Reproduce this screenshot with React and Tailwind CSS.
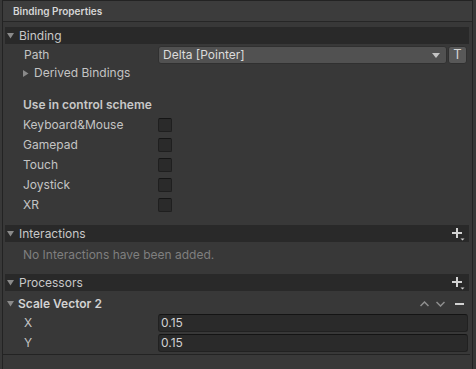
import React from 'react';

const Tri = ({ down = true }) =>
  down ? (
    <svg width="7" height="7" viewBox="0 0 7 7" className="shrink-0">
      <path d="M0 1 L7 1 L3.5 6.5 Z" fill="#8a8a8a" />
    </svg>
  ) : (
    <svg width="7" height="7" viewBox="0 0 7 7" className="shrink-0">
      <path d="M1 0 L6.5 3.5 L1 7 Z" fill="#8a8a8a" />
    </svg>
  );

const PlusMenu = () => (
  <svg width="14" height="13" viewBox="0 0 14 13">
    <path d="M5 0 H7 V4 H11 V6 H7 V10 H5 V6 H1 V4 H5 Z" fill="#d2d2d2" />
    <path d="M9.5 10.5 H13.5 L11.5 12.5 Z" fill="#d2d2d2" />
  </svg>
);

function Header({ title, plus }) {
  return (
    <div className="ml-[2px] mr-[3px] h-[17px] shrink-0 bg-[#292929] flex items-center pl-[2px] pr-[4px]">
      <Tri />
      <span className="ml-[5px] text-[12px] text-[#c8c8c8]">{title}</span>
      {plus && (
        <span className="ml-auto mt-[2px]">
          <PlusMenu />
        </span>
      )}
    </div>
  );
}

function Checkbox() {
  return (
    <div className="w-[14px] h-[14px] rounded-[2px] bg-[#2a2a2a] border border-[#1f1f1f] border-t-[#151515]" />
  );
}

function InputRow({ label, value }) {
  return (
    <div className="h-[20px] shrink-0 flex items-start">
      <span className="w-[155px] h-[18px] flex items-center pl-[21px] text-[12px] text-[#c4c4c4]">{label}</span>
      <div className="w-[310px] h-[18px] rounded-[3px] bg-[#2a2a2a] border border-[#212121] border-t-[#141414] flex items-center px-[2px] text-[12px] text-[#d2d2d2]">
        {value}
      </div>
    </div>
  );
}

export default function App() {
  const schemes = ['Keyboard&Mouse', 'Gamepad', 'Touch', 'Joystick', 'XR'];

  return (
    <div className="w-[476px] h-[369px] bg-[#383838] overflow-hidden" style={{ fontFamily: 'Inter, "Noto Sans", sans-serif' }}>
      <div className="ml-[2px] w-[471px] h-[369px] border-l border-r border-t border-[#232323] flex flex-col">
        {/* Title */}
        <div className="h-[21px] shrink-0 bg-[#3c3c3c] border-b border-[#262626] flex items-center pl-[10px] text-[10px] font-semibold text-[#d6d6d6]">
          Binding Properties
        </div>

        <div className="h-[5px] shrink-0" />
        <Header title="Binding" />

        {/* Path */}
        <div className="h-[20px] shrink-0 mt-[1px] flex items-center">
          <span className="w-[155px] pl-[21px] text-[12px] text-[#c4c4c4]">Path</span>
          <div className="w-[289px] h-[18px] rounded-[3px] bg-[#515151] border border-[#303030] flex items-center pl-[4px] pr-[6px] text-[12px] text-[#dcdcdc]">
            Delta [Pointer]
            <svg width="8" height="5" viewBox="0 0 8 5" className="ml-auto">
              <path d="M0 0 H8 L4 5 Z" fill="#c4c4c4" />
            </svg>
          </div>
          <div className="ml-[1px] w-[19px] h-[18px] rounded-[3px] bg-[#585858] border border-[#303030] flex items-center justify-center text-[13px] text-[#d4d4d4]">
            T
          </div>
        </div>

        {/* Derived */}
        <div className="h-[16px] shrink-0 flex items-center pl-[19px]">
          <Tri down={false} />
          <span className="ml-[5px] text-[12px] text-[#c4c4c4]">Derived Bindings</span>
        </div>

        <div className="h-[14px] shrink-0" />
        <div className="h-[20px] shrink-0 flex items-center pl-[20px] text-[12px] font-semibold text-[#c8c8c8]">
          Use in control scheme
        </div>
        {schemes.map((s) => (
          <div key={s} className="h-[20px] shrink-0 flex items-center">
            <span className="w-[155px] pl-[20px] text-[12px] text-[#c4c4c4]">{s}</span>
            <Checkbox />
          </div>
        ))}

        <div className="h-[10px] shrink-0" />
        <Header title="Interactions" plus />
        <div className="h-[26px] shrink-0 flex items-center pl-[20px] text-[12px] text-[#7f7f7f]">
          No Interactions have been added.
        </div>

        <div className="h-[6px] shrink-0" />
        <Header title="Processors" plus />

        {/* Scale Vector 2 */}
        <div className="h-[23px] shrink-0 flex items-center pt-[2px] pl-[4px] pr-[8px]">
          <Tri />
          <span className="ml-[4px] text-[12px] font-semibold text-[#d2d2d2]">Scale Vector 2</span>
          <div className="ml-auto flex items-center">
            <svg width="9" height="6" viewBox="0 0 9 6">
              <path d="M0.5 5 L4.5 1 L8.5 5" stroke="#8e8e8e" strokeWidth="1.5" fill="none" />
            </svg>
            <svg width="9" height="6" viewBox="0 0 9 6" className="ml-[7px]">
              <path d="M0.5 1 L4.5 5 L8.5 1" stroke="#8e8e8e" strokeWidth="1.5" fill="none" />
            </svg>
            <div className="ml-[10px] w-[9px] h-[2px] bg-[#d2d2d2]" />
          </div>
        </div>
        <InputRow label="X" value="0.15" />
        <InputRow label="Y" value="0.15" />
        <div className="mr-[2px] h-px shrink-0 bg-[#232323]" />
      </div>
    </div>
  );
}
